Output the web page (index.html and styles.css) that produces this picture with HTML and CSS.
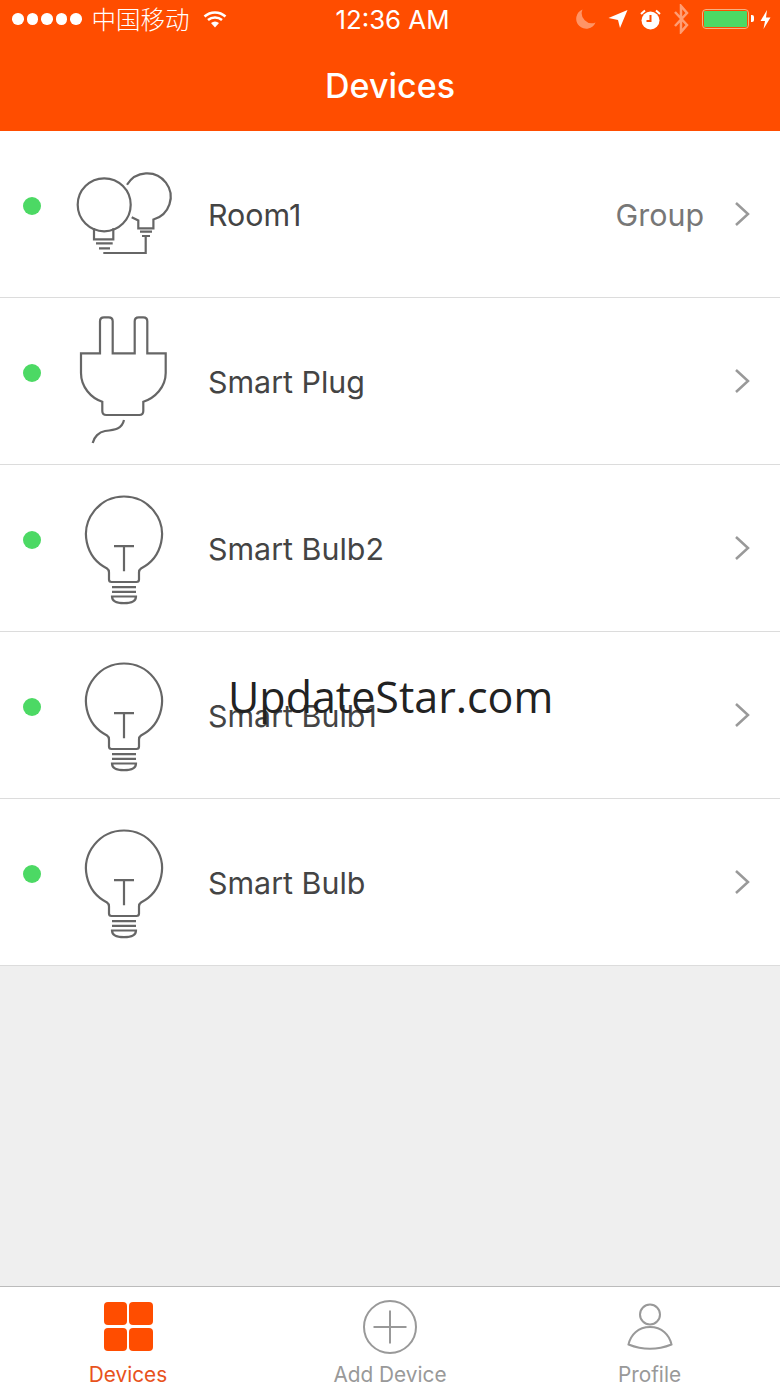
FILE: index.html
```html
<!DOCTYPE html>
<html lang="en">
<head>
    <meta charset="UTF-8">
    <meta name="viewport" content="width=device-width, initial-scale=1.0">
    <title>Devices</title>
    <link rel="stylesheet" href="styles.css">
</head>
<body>

<svg class="defs" width="0" height="0">
    <symbol id="bulb" viewBox="0 -0.500 110 130">
        <path d="M38 85A38 38 0 1 1 72 85C70.5 86 70 87 70 89V96Q70 98.5 67.5 98.5H42.5Q40 98.5 40 96V89C40 87 39.500 86 38 85Z"/>
        <path d="M43 103.700H67M43 108.300H67M43 113H67C67 117 63 119.700 55 119.700S43 117 43 113Z"/>
        <path d="M45 62.700H65M55 62.700V87.700"/>
    </symbol>
    <symbol id="chevron" viewBox="0 0 16 26">
        <path d="M2 2L14 13L2 24"/>
    </symbol>
</svg>

<header class="topbar">
    <div class="status">
        <div class="status-left">
            <span class="signal"><i></i><i></i><i></i><i></i><i></i></span>
            <span class="carrier">中国移动</span>
            <svg class="wifi" width="24" height="18" viewBox="0 0 24 18">
                <path class="wifi-arc" d="M1.500 6.500C7.500 1 16.500 1 22.500 6.500M5 10C9 6.500 15 6.500 19 10"/>
                <path class="wifi-fill" d="M8 13C10.500 11 13.500 11 16 13L12 17.500Z"/>
            </svg>
        </div>
        <div class="time">12:36 AM</div>
        <div class="status-right">
            <svg class="st-moon" width="20" height="20" viewBox="0 0 20 20"><path d="M6.500 0.500A10 10 0 1 0 19.500 13.500A10 10 0 0 1 6.500 0.500Z"/></svg>
            <svg width="20" height="20" viewBox="0 0 20 20"><path d="M0.500 9L19.500 1L12 19L10 11Z"/></svg>
            <svg width="21" height="21" viewBox="0 0 21 21">
                <circle cx="10.500" cy="11.500" r="9"/>
                <path class="st-hand" d="M10.500 6V12H6.500"/>
                <path class="st-ring" d="M1 5L5 1.500M20 5L16 1.500"/>
            </svg>
            <svg class="st-bt" width="16" height="30" viewBox="0 0 16 30"><path d="M2 8L14 21L8 28V2L14 9L2 22"/></svg>
            <div class="battery"><span class="battery-fill"></span></div>
            <svg class="st-bolt" width="11" height="19" viewBox="0 0 11 19"><path d="M7 0L0.500 11H5L3.500 19L10.500 7.500H6Z"/></svg>
        </div>
    </div>
    <h1 class="title">Devices</h1>
</header>

<main class="list">
    <a class="row">
        <span class="dot"></span>
        <svg class="thumb" width="110" height="130" viewBox="0 0 110 130">
            <circle cx="35.200" cy="55.800" r="26.500"/>
            <path d="M25 79.300V90.300H44.300V79.300M27 94.300H43.700M30 99.300H41M34.300 104H76.700V87.700"/>
            <path d="M58 35.800A23.500 23.500 0 1 1 84.400 70.500V79.300H69.300V71.500L62.700 68.300M71 82.700H83M73 87H81"/>
        </svg>
        <span class="name">Room1</span>
        <span class="tag">Group</span>
        <svg class="chevron"><use href="#chevron"/></svg>
    </a>
    <a class="row">
        <span class="dot"></span>
        <svg class="thumb" width="110" height="130" viewBox="0 0 110 130">
            <path d="M31 37.300V5.300Q31 1.300 35 1.300H39.700Q43.700 1.300 43.700 5.300V37.300H65.700V5.300Q65.700 1.300 69.700 1.300H74.300Q78.300 1.300 78.300 5.300V37.300H96.700V57C96.700 71 86 82 74.300 85.700V95Q74.300 99 70.300 99H37.300Q33.300 99 33.300 95V85.700C22 82 12 71 12 57V37.300Z"/>
            <path d="M55 104C53 113 46 114 36 115C30 116 25 121 23.700 127"/>
        </svg>
        <span class="name">Smart Plug</span>
        <svg class="chevron"><use href="#chevron"/></svg>
    </a>
    <a class="row">
        <span class="dot"></span>
        <svg class="thumb" width="110" height="130"><use href="#bulb"/></svg>
        <span class="name">Smart Bulb2</span>
        <svg class="chevron"><use href="#chevron"/></svg>
    </a>
    <a class="row">
        <span class="dot"></span>
        <svg class="thumb" width="110" height="130"><use href="#bulb"/></svg>
        <span class="name">Smart Bulb1</span>
        <svg class="chevron"><use href="#chevron"/></svg>
    </a>
    <a class="row">
        <span class="dot"></span>
        <svg class="thumb" width="110" height="130"><use href="#bulb"/></svg>
        <span class="name">Smart Bulb</span>
        <svg class="chevron"><use href="#chevron"/></svg>
    </a>
</main>

<nav class="tabbar">
    <a class="tab active">
        <span class="tab-grid"><i></i><i></i><i></i><i></i></span>
        <span class="tab-label">Devices</span>
    </a>
    <a class="tab">
        <svg class="tab-icon" width="54" height="54" viewBox="0 0 54 54">
            <circle cx="27" cy="27" r="26"/>
            <path d="M27 10.500V43.500M10.500 27H43.500"/>
        </svg>
        <span class="tab-label">Add Device</span>
    </a>
    <a class="tab">
        <svg class="tab-icon" width="54" height="54" viewBox="0 0 54 54">
            <circle cx="27" cy="14.500" r="10"/>
            <path d="M5.500 44.500C7.500 35 15 27 27 27S46.500 35 48.500 44.500Q27 53 5.500 44.500Z"/>
        </svg>
        <span class="tab-label">Profile</span>
    </a>
</nav>

<div class="watermark">UpdateStar.com</div>

</body>
</html>
```

FILE: styles.css
```css
body {
    margin: 0;
    height: 1387px;
    display: flex;
    flex-direction: column;
    position: relative;
    overflow: hidden;
    font-family: Inter, "Noto Sans", sans-serif;
    background-color: #efefef;
    color: #444;
}

.defs {
    position: absolute;
}

/* top bar */
.topbar {
    height: 131px;
    background-color: #ff4d00;
    color: #fff;
}

.status {
    height: 38px;
    padding: 0 9px 0 12px;
    display: grid;
    grid-template-columns: 1fr auto 1fr;
    align-items: center;
}

.status-left {
    display: flex;
    align-items: center;
}

.signal {
    display: flex;
    gap: 3px;
}

.signal i {
    width: 11.500px;
    height: 11.500px;
    border-radius: 50%;
    background-color: #fff;
}

.carrier {
    margin-left: 10px;
    font-family: "Noto Sans CJK SC", sans-serif;
    font-size: 24.500px;
    font-weight: 300;
    line-height: 38px;
}

.wifi {
    margin-left: 13px;
}

.wifi-arc {
    fill: none;
    stroke: #fff;
    stroke-width: 2.500;
}

.wifi-fill {
    fill: #fff;
}

.time {
    margin-left: 2px;
    font-size: 25.800px;
    font-weight: 400;
}

.status-right {
    display: flex;
    align-items: center;
    justify-content: flex-end;
    gap: 12px;
}

.status-right svg {
    fill: #fff;
}

.status-right .st-moon {
    opacity: 0.4;
}

.status-right .st-hand {
    fill: none;
    stroke: #ff4d00;
    stroke-width: 2;
}

.status-right .st-ring {
    fill: none;
    stroke: #fff;
    stroke-width: 2;
}

.status-right .st-bt {
    fill: none;
    stroke: rgba(255, 255, 255, 0.45);
    stroke-width: 2.500;
}

.battery {
    width: 47px;
    height: 20px;
    margin-left: 1px;
    margin-right: 1px;
    box-sizing: border-box;
    padding: 1px;
    border: 1.500px solid #f5b183;
    border-radius: 4px;
    position: relative;
}

.battery::after {
    content: "";
    position: absolute;
    right: -6px;
    top: 5px;
    width: 3px;
    height: 7px;
    border-radius: 0 2px 2px 0;
    background-color: #fff;
}

.battery-fill {
    display: block;
    height: 100%;
    background-color: #4cd964;
    border-radius: 1px;
}

.status-right .st-bolt {
    margin-left: -2px;
}

.title {
    margin: 0;
    height: 93px;
    line-height: 96px;
    text-align: center;
    font-size: 34px;
    font-weight: 500;
}

/* device rows */
.list {
    flex: 1;
}

.row {
    height: 166px;
    padding: 0 30px 0 23px;
    display: flex;
    align-items: center;
    background-color: #fff;
    border-bottom: 1px solid #dcdcdc;
}

.dot {
    width: 18px;
    height: 18px;
    margin-top: -17px;
    border-radius: 50%;
    background-color: #4cd964;
}

.thumb {
    margin-left: 28px;
    fill: none;
    stroke: #666;
    stroke-width: 2.200;
}

.name {
    margin: 2px 0 0 29px;
    flex: 1;
    font-size: 30.400px;
}

.tag {
    margin-top: 2px;
    font-size: 30.400px;
    color: #777;
}

.chevron {
    width: 16px;
    height: 26px;
    margin-left: 30px;
    fill: none;
    stroke: #999;
    stroke-width: 2.500;
}

/* tab bar */
.tabbar {
    height: 101px;
    box-sizing: border-box;
    display: grid;
    grid-template-columns: 256px 268px 251px;
    background-color: #fff;
    border-top: 1px solid #bbb;
}

.tab {
    display: flex;
    flex-direction: column;
    align-items: center;
    padding-top: 13px;
    color: #999;
}

.tab.active {
    color: #e8521c;
}

.tab-icon {
    fill: none;
    stroke: #999;
    stroke-width: 2;
}

.tab-grid {
    width: 49px;
    height: 49px;
    margin: 2px 0 3px;
    display: grid;
    grid-template-columns: 1fr 1fr;
    gap: 2.500px;
}

.tab-grid i {
    border-radius: 4px;
    background-color: #ff4d00;
}

.tab-label {
    margin-top: 9px;
    font-size: 20.800px;
    line-height: 24px;
}

.watermark {
    position: absolute;
    left: 228px;
    top: 668px;
    font-family: "Open Sans", sans-serif;
    font-size: 43px;
    line-height: 58px;
    color: #222;
}
```
